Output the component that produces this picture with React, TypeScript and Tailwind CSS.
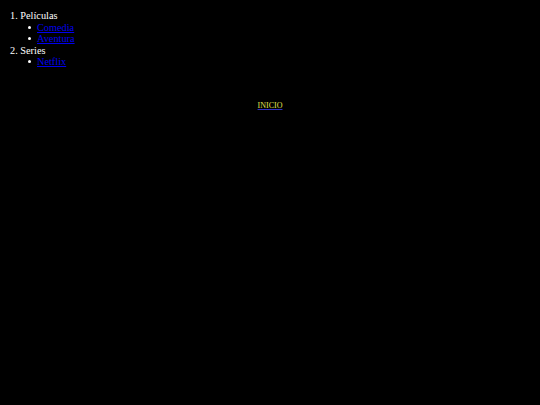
export default function App() {
  return (
    <div className="min-h-[405px] bg-black text-[#ffffff] font-['Liberation_Serif',serif] text-[10.3px] leading-[11.5px] pt-[10px]">
      <ol className="flex flex-col">
        <li className="pl-[10px]">1. Películas</li>
        <li>
          <ul className="flex flex-col pl-[28px]">
            <li className="flex items-center gap-[6px]">
              <span className="w-[3px] h-[3px] rounded-full bg-white" />
              <a href="#" className="text-[#0000ee] underline">Comedia</a>
            </li>
            <li className="flex items-center gap-[6px]">
              <span className="w-[3px] h-[3px] rounded-full bg-white" />
              <a href="#" className="text-[#0000ee] underline">Aventura</a>
            </li>
          </ul>
        </li>
        <li className="pl-[10px]">2. Series</li>
        <li>
          <ul className="flex flex-col pl-[28px]">
            <li className="flex items-center gap-[6px]">
              <span className="w-[3px] h-[3px] rounded-full bg-white" />
              <a href="#" className="text-[#0000ee] underline">Netflix</a>
            </li>
          </ul>
        </li>
      </ol>
      <div className="flex justify-center mt-[33px]">
        <a href="#" className="text-[8px] leading-[10px] text-[#e0e050] underline decoration-[#3030c0] decoration-1 underline-offset-[1px]">INICIO</a>
      </div>
    </div>
  );
}
